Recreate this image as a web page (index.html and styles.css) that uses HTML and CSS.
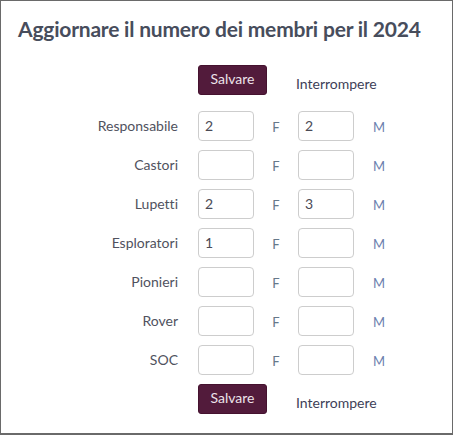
FILE: index.html
```html
<!DOCTYPE html>
<html lang="it">
<head>
<meta charset="utf-8">
<link rel="stylesheet" href="styles.css">
</head>
<body>
<div class="panel">
  <h1 class="title">Aggiornare il numero dei membri per il 2024</h1>
  <div class="actions top">
    <button class="btn-save">Salvare</button>
    <a class="btn-cancel">Interrompere</a>
  </div>
  <div class="grid">
    <label class="lbl">Responsabile</label><input class="num" value="2"><span class="sex f">F</span><input class="num" value="2"><span class="sex m">M</span>
    <label class="lbl">Castori</label><input class="num" value=""><span class="sex f">F</span><input class="num" value=""><span class="sex m">M</span>
    <label class="lbl">Lupetti</label><input class="num" value="2"><span class="sex f">F</span><input class="num" value="3"><span class="sex m">M</span>
    <label class="lbl">Esploratori</label><input class="num" value="1"><span class="sex f">F</span><input class="num" value=""><span class="sex m">M</span>
    <label class="lbl">Pionieri</label><input class="num" value=""><span class="sex f">F</span><input class="num" value=""><span class="sex m">M</span>
    <label class="lbl">Rover</label><input class="num" value=""><span class="sex f">F</span><input class="num" value=""><span class="sex m">M</span>
    <label class="lbl">SOC</label><input class="num" value=""><span class="sex f">F</span><input class="num" value=""><span class="sex m">M</span>
  </div>
  <div class="actions bottom">
    <button class="btn-save">Salvare</button>
    <a class="btn-cancel">Interrompere</a>
  </div>
</div>
</body>
</html>
```

FILE: styles.css
```css
html, body {
  margin: 0;
  padding: 0;
  background: #fff;
}
body {
  font-family: Lato, "Noto Sans", sans-serif;
  font-variant-ligatures: none;
}
.panel {
  box-sizing: border-box;
  width: 453px;
  height: 435px;
  border: 1px solid #6a6a6a;
  border-bottom-width: 2px;
  padding: 14px 0 0 17px;
}
.title {
  margin: 0;
  font-size: 21px;
  line-height: 28px;
  font-weight: 700;
  color: #474d5c;
  letter-spacing: -0.2px;
}
.actions {
  display: flex;
  align-items: flex-start;
  padding-left: 180px;
  gap: 29px;
}
.actions.top {
  margin-top: 22px;
}
.actions.bottom {
  margin-top: 9px;
}
.btn-save {
  width: 69px;
  height: 30px;
  border: 1px solid #45122f;
  border-radius: 3px;
  background: #521b3b;
  color: #ece3ea;
  font-family: Lato, "Noto Sans", sans-serif;
  font-size: 14px;
  padding: 0 0 4px;
  cursor: pointer;
}
.btn-cancel {
  font-size: 14px;
  color: #3e3f58;
  padding-top: 11px;
  line-height: 16px;
}
.grid {
  display: grid;
  grid-template-columns: 180px 56px 44px 56px auto;
  row-gap: 9px;
  margin-top: 16px;
  align-items: center;
}
.lbl {
  text-align: right;
  padding-right: 20px;
  font-size: 14px;
  color: #50525e;
  padding-bottom: 2px;
}
.num {
  box-sizing: border-box;
  width: 56px;
  height: 30px;
  border: 1px solid #cdcdcd;
  border-radius: 4px;
  padding: 0 0 2px 6px;
  font-family: Lato, "Noto Sans", sans-serif;
  font-size: 14px;
  color: #4a4a55;
  background: #fff;
}
.sex {
  font-size: 13px;
  padding-top: 2px;
}
.sex.f {
  text-align: center;
  color: #66788a;
}
.sex.m {
  padding-left: 19px;
  color: #6b80ae;
}
```
